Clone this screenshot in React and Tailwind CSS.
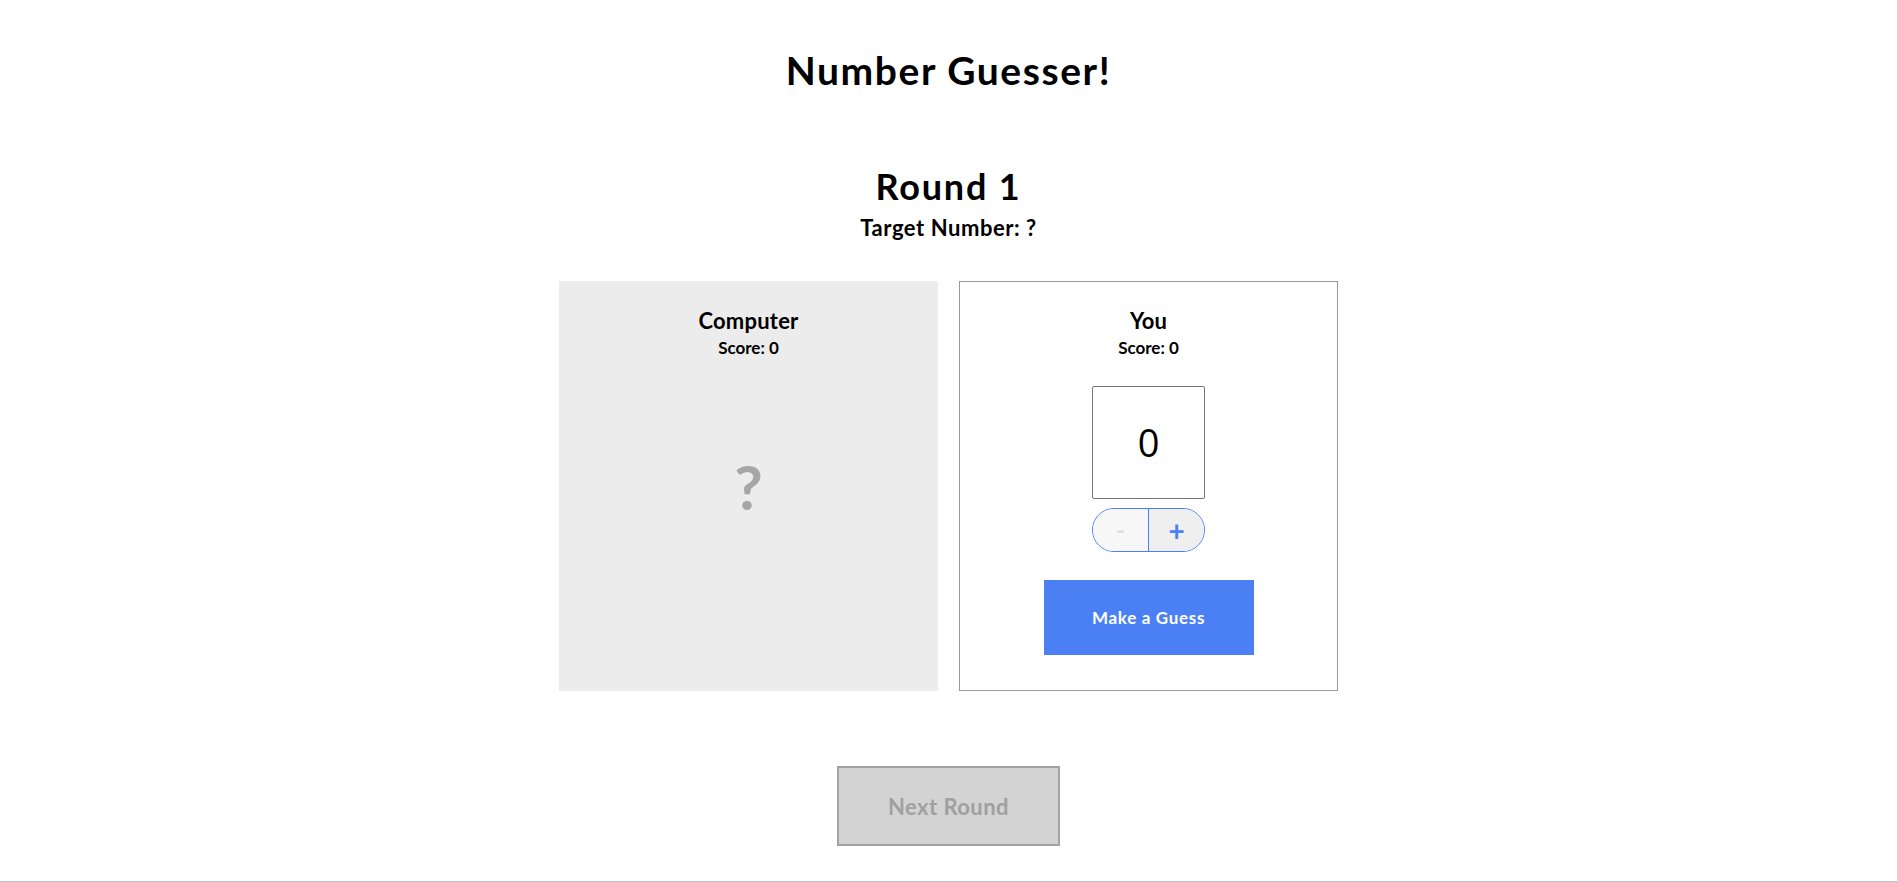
import { useState } from 'react';

const font = { fontFamily: 'Lato, "Noto Sans", sans-serif' };

const App = () => {
  const [guess, setGuess] = useState(0);

  return (
    <div
      className="h-screen flex flex-col items-center border-b border-[#b9c1c1] text-black"
      style={font}
    >
      <h1 className="mt-[47px] text-[39px] leading-[46px] font-bold tracking-[0.04em]">Number Guesser!</h1>

      <h2 className="mt-[73px] text-[36px] leading-[41px] font-bold tracking-[0.05em]">Round 1</h2>
      <p className="mt-[7px] text-[22px] leading-[28px] font-bold tracking-[0.025em]">Target Number: ?</p>

      <div className="mt-[39px] flex gap-[21px]">
        {/* computer side */}
        <div className="w-[379px] h-[410px] bg-[#ececec] flex flex-col items-center pt-[26px]">
          <h3 className="text-[22px] leading-[28px] font-bold tracking-[0.01em]">Computer</h3>
          <p className="mt-[2px] text-[17px] leading-[22px] font-bold">Score: 0</p>
          <div className="mt-[91px] text-[62px] leading-[72px] font-bold text-[#a6a6a6]">?</div>
        </div>

        {/* player side */}
        <div className="w-[379px] h-[410px] border border-[#999999] flex flex-col items-center pt-[25px]">
          <h3 className="text-[22px] leading-[28px] font-bold">You</h3>
          <p className="mt-[2px] text-[17px] leading-[22px] font-bold">Score: 0</p>

          <div
            className="mt-[27px] w-[113px] h-[113px] border border-[#767676] rounded-[2px] flex items-center justify-center text-[38px]"
            style={{ fontFamily: '"Open Sans", "Noto Sans", sans-serif' }}
          >
            {guess}
          </div>

          <div className="mt-[9px] w-[113px] h-[44px] flex rounded-full border border-[#4b7ff4] overflow-hidden">
            <button
              onClick={() => setGuess(Math.max(0, guess - 1))}
              className="flex-1 bg-[#f7f7f7] text-[#dddddd] text-[24px] font-bold leading-none"
            >
              -
            </button>
            <div className="w-px bg-[#4b7ff4]"></div>
            <button
              onClick={() => setGuess(Math.min(10, guess + 1))}
              className="flex-1 bg-[#efefef] text-[#4b7ff4] text-[28px] font-bold leading-none"
            >
              +
            </button>
          </div>

          <button className="mt-[28px] w-[210px] h-[75px] bg-[#4b7ff4] text-white text-[17px] font-bold tracking-[0.04em]">
            Make a Guess
          </button>
        </div>
      </div>

      <button
        disabled
        className="mt-[75px] w-[223px] h-[80px] bg-[#d3d3d3] border-2 border-[#a3a3a3] text-[#a0a0a0] text-[22px] font-bold tracking-[0.02em]"
      >
        Next Round
      </button>
    </div>
  );
};

export default App;
